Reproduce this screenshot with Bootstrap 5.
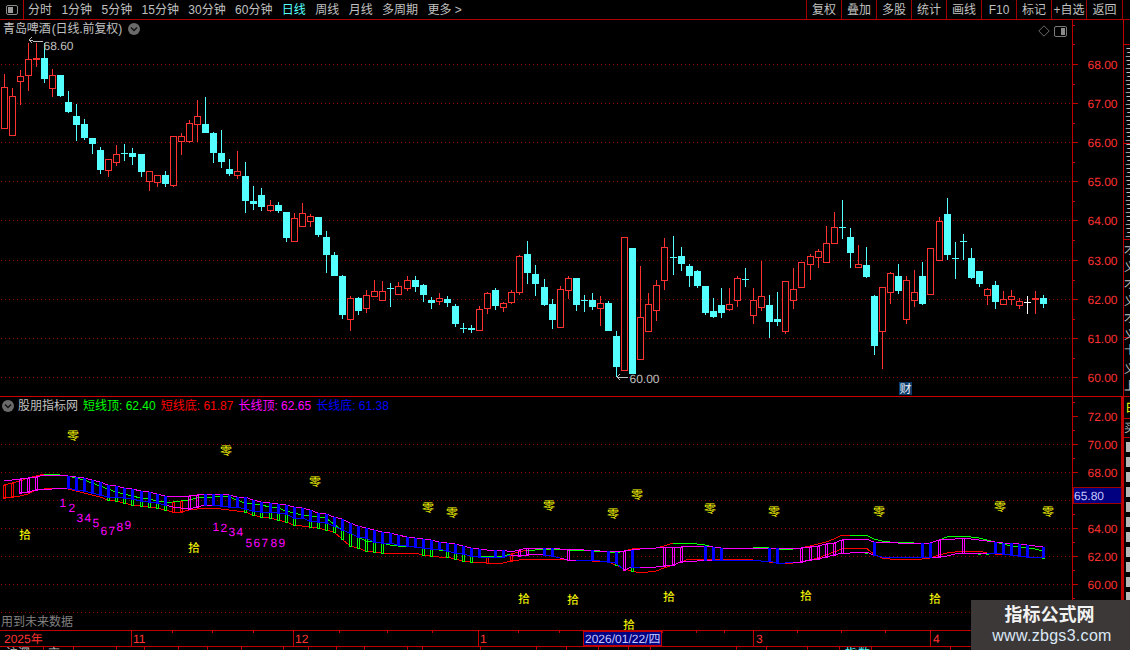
<!DOCTYPE html>
<html lang="zh">
<head>
<meta charset="utf-8">
<title>青岛啤酒</title>
<link href="https://cdn.jsdelivr.net/npm/bootstrap@5.3.0/dist/css/bootstrap.min.css" rel="stylesheet">
<style>
html,body{margin:0;height:650px;overflow:hidden;background:#000;}
body,svg text{font-family:"Liberation Sans","Noto Sans CJK SC",sans-serif;font-size:12px;}
.term{width:1130px;height:650px;background:#000;color:#c0c0c0;line-height:1;}
.tbar{height:20px;border-bottom:1px solid #b00000;flex:none;}
.tlogo{width:24px;height:19px;border-right:1px solid #b00000;flex:none;}
.titems{gap:9.4px;padding-left:4px;}
.titem{white-space:nowrap;}
.titem-on{color:#54ffff;}
.tcells{margin-right:7px;}
.tcell{width:35px;height:19px;border-left:1px solid #a00000;white-space:nowrap;}
.tcell-last{width:37px;border-right:1px solid #a00000;}
.workarea{height:630px;}
.panes{width:1123px;flex:none;}
.pane-main{height:376px;}
.pane-sub{height:234px;}
.pane-date{height:20px;}
.side-strip{width:7px;flex:none;}
.pane-main svg,.pane-sub svg,.pane-date svg,.side-strip svg{display:block;}
.pane-head{position:absolute;left:3px;top:2px;height:14px;gap:6px;white-space:nowrap;}
.pane-title{word-spacing:-2px;letter-spacing:-.12px;}
.pane-tools{position:absolute;left:1038px;top:5px;}
.sub-head{left:2px;top:3px;gap:0;}
.ind-g{color:#00ff00;margin-left:5px;}
.ind-r{color:#ff0000;margin-left:5px;}
.ind-m{color:#ff00ff;margin-left:5px;}
.ind-b{color:#0000ff;margin-left:5px;}
.sub-name{margin-left:4px;}
.future-note{position:absolute;left:1px;top:220px;color:#808080;white-space:nowrap;}
.stamp{position:absolute;right:0;bottom:0;width:159px;height:50px;background:#3c3838;z-index:5;}
.stamp-cn{font-weight:700;font-size:18px;color:#f2f2f2;margin-top:6px;margin-right:2px;}
.stamp-en{font-size:16px;color:#dbe8f5;margin-top:4px;margin-left:3px;letter-spacing:.3px;}
</style>
</head>
<body>
<div class="term d-flex flex-column position-relative">
  <div class="tbar d-flex align-items-center">
    <div class="tlogo d-flex align-items-center justify-content-center">
      <svg width="12" height="10" viewBox="0 0 12 10"><rect x=".5" y=".5" width="11" height="9" rx="1.5" fill="none" stroke="#8a8a8a"/><rect x="2" y="2" width="5" height="6" fill="#9a9a9a"/></svg>
    </div>
    <div class="titems d-flex align-items-center">
      <span class="titem">分时</span><span class="titem">1分钟</span><span class="titem">5分钟</span><span class="titem">15分钟</span><span class="titem">30分钟</span><span class="titem">60分钟</span><span class="titem titem-on">日线</span><span class="titem">周线</span><span class="titem">月线</span><span class="titem">多周期</span><span class="titem">更多 &gt;</span>
    </div>
    <div class="tcells d-flex ms-auto">
      <div class="tcell d-flex align-items-center justify-content-center">复权</div>
      <div class="tcell d-flex align-items-center justify-content-center">叠加</div>
      <div class="tcell d-flex align-items-center justify-content-center">多股</div>
      <div class="tcell d-flex align-items-center justify-content-center">统计</div>
      <div class="tcell d-flex align-items-center justify-content-center">画线</div>
      <div class="tcell d-flex align-items-center justify-content-center">F10</div>
      <div class="tcell d-flex align-items-center justify-content-center">标记</div>
      <div class="tcell d-flex align-items-center justify-content-center">+自选</div>
      <div class="tcell tcell-last d-flex align-items-center justify-content-center">返回</div>
    </div>
  </div>
  <div class="workarea d-flex">
    <div class="panes d-flex flex-column">
      <div class="pane-main position-relative">
        <svg id="mainSvg" width="1123" height="376" viewBox="0 20 1123 376" shape-rendering="crispEdges"></svg>
        <div class="pane-head d-flex align-items-center">
          <span class="pane-title">青岛啤酒 (日线.前复权)</span>
          <svg width="12" height="12" viewBox="0 0 12 12"><circle cx="6" cy="6" r="6" fill="#6a6a6a"/><path d="M3 4.5 6 7.5 9 4.5" fill="none" stroke="#111" stroke-width="1.4"/></svg>
        </div>
        <div class="pane-tools d-flex align-items-center gap-1">
          <svg width="12" height="12" viewBox="0 0 12 12"><path d="M6 .8 11.2 6 6 11.2 .8 6Z" fill="none" stroke="#6a6a6a"/></svg>
          <svg width="13" height="11" viewBox="0 0 13 11"><rect x=".5" y=".5" width="12" height="10" rx="1.5" fill="none" stroke="#7a7a7a"/><rect x="7" y="2" width="4" height="7" fill="#8a8a8a"/></svg>
        </div>
      </div>
      <div class="pane-sub position-relative">
        <svg id="subSvg" width="1123" height="234" viewBox="0 396 1123 234" shape-rendering="crispEdges"></svg>
        <div class="pane-head sub-head d-flex align-items-center">
          <svg width="12" height="12" viewBox="0 0 12 12"><circle cx="6" cy="6" r="6" fill="#6a6a6a"/><path d="M3 4.5 6 7.5 9 4.5" fill="none" stroke="#111" stroke-width="1.4"/></svg>
          <span class="sub-name">股朋指标网</span>
          <span class="ind-g">短线顶: 62.40</span>
          <span class="ind-r">短线底: 61.87</span>
          <span class="ind-m">长线顶: 62.65</span>
          <span class="ind-b">长线底: 61.38</span>
        </div>
        <div class="future-note">用到未来数据</div>
      </div>
      <div class="pane-date">
        <svg id="dateSvg" width="1123" height="20" viewBox="0 630 1123 20" shape-rendering="crispEdges"></svg>
      </div>
    </div>
    <div class="side-strip">
      <svg id="sideSvg" width="7" height="630" viewBox="1123 20 7 630" shape-rendering="crispEdges"></svg>
    </div>
  </div>
  <div class="stamp">
    <div class="stamp-cn text-center">指标公式网</div>
    <div class="stamp-en text-center">www.zbgs3.com</div>
  </div>
</div>
<script>
var LINE='#c00000',DOT='#8c0000',RED='#ff3232',CY='#54ffff',GR='#c0c0c0';
// idx implied: colour, body top, body bottom, wick top, wick bottom
var K=[['r',87,128,74,129],['r',96,135,88,135],['r',76,81,70,105],['r',59,75,43,91],['R',58,60,43,67],['c',58,79,43,83],['r',75,88,69,97],['c',75,96,75,97],['c',102,112,91,113],['c',116,125,104,141],
['c',124,138,119,140],['c',138,144,138,154],['c',150,170,147,174],['r',159,170,159,177],['r',154,162,145,166],['C',153,153,144,161],['c',153,157,148,165],['c',154,172,154,177],['r',171,181,171,191],['r',175,182,175,187],
['c',175,184,171,187],['r',136,185,136,187],['r',136,141,133,155],['r',123,141,120,143],['r',116,124,100,142],['c',124,133,97,133],['c',133,153,132,163],['c',153,162,130,168],['c',169,174,159,176],['r',171,175,151,179],
['c',176,201,162,213],['c',201,204,186,210],['c',195,207,188,211],['r',205,210,200,212],['c',205,211,202,213],['c',212,238,212,242],['r',218,241,213,241],['r',213,226,203,226],['r',216,221,214,227],['c',217,235,217,237],
['c',237,255,231,273],['c',255,276,252,276],['c',276,315,275,319],['r',298,319,296,331],['c',298,311,297,315],['r',295,308,290,313],['r',291,296,280,296],['r',291,300,281,300],['C',288,288,283,307],['r',286,294,282,294],
['r',280,288,276,291],['c',280,287,276,292],['c',285,295,284,302],['c',300,303,297,309],['r',298,301,293,305],['c',299,303,296,307],['c',306,324,304,327],['C',328,328,323,333],['c',328,330,325,333],['r',309,330,306,330],
['r',293,308,292,314],['c',290,306,288,310],['r',303,307,302,312],['r',292,302,290,304],['r',256,292,255,295],['c',254,273,241,284],['c',274,284,265,296],['c',287,305,279,306],['c',304,320,299,329],['r',289,327,286,328],
['r',278,290,276,299],['c',278,305,278,311],['C',300,300,295,312],['c',300,307,293,310],['r',303,308,296,326],['c',303,331,301,331],['c',336,367,331,377],['r',237,370,237,371],['c',248,374,248,374],['r',317,359,266,359],
['r',304,331,293,331],['r',285,310,280,321],['r',247,280,238,290],['C',257,257,236,275],['c',256,264,247,271],['c',266,276,264,287],['c',271,286,270,288],['c',286,313,286,315],['c',311,317,298,318],['c',305,313,288,318],
['r',304,309,288,311],['r',278,300,276,307],['C',279,279,268,287],['r',300,315,288,324],['r',296,307,261,311],['c',305,322,295,338],['c',319,322,292,326],['r',281,331,281,334],['r',289,300,268,309],['r',262,287,262,287],
['r',256,264,254,280],['r',251,257,249,268],['r',243,262,226,262],['r',227,243,212,243],['C',227,227,200,239],['c',237,253,228,268],['r',264,267,245,268],['c',265,277,247,278],['c',296,346,295,355],['r',287,331,287,369],
['r',273,292,272,304],['c',276,291,264,294],['r',280,319,276,324],['r',292,300,270,307],['c',276,304,262,305],['r',248,294,248,295],['r',221,260,217,260],['c',214,255,198,260],['C',258,258,242,279],['C',241,241,234,260],
['c',258,278,248,279],['c',271,284,271,287],['r',289,295,288,305],['c',285,302,281,309],['r',299,304,291,304],['r',296,299,290,305],['r',301,305,298,309],['W',302,302,296,314],['R',298,300,291,314],['c',298,304,295,308]];
function col(i){return 4+8*i+(i>=17)+(i>=33)+(i>=50)+(i>=67)+(i>=83)+(i>=100)+(i>=116);}
function dots(y){return '<line x1="1" x2="1072" y1="'+y+'" y2="'+y+'" stroke="'+DOT+'" stroke-dasharray="1 3"/>';}
function rc(x,y,w,h,f){return '<rect x="'+x+'" y="'+y+'" width="'+w+'" height="'+h+'" fill="'+f+'"/>';}
function tx(x,y,t,f,extra){return '<text x="'+x+'" y="'+y+'" fill="'+f+'" '+(extra||'')+' text-rendering="geometricPrecision">'+t+'</text>';}
/* ---------- main pane ---------- */
var s='';
[64,103,142,181,220,260,299,338,377].forEach(function(y,i){
  s+=dots(y);
  s+=rc(1073,y,5,1,LINE);
  s+=tx(1087.5,y+5,(68-i)+'.00',RED);
  s+=rc(1073,y+20,2,1,LINE);
});
s+=rc(1073,44,2,1,LINE)+rc(1073,25,2,1,LINE);
K.forEach(function(k,i){
  var c=col(i),t=k[0],a=k[1],b=k[2],wt=k[3],wb=k[4];
  if(t==='r'){
    s+=rc(c,wt,1,a-wt,RED)+rc(c,b,1,wb-b,RED);
    s+='<rect x="'+(c-2.5)+'" y="'+(a+.5)+'" width="6" height="'+(b-a)+'" fill="#000" stroke="'+RED+'"/>';
  }else if(t==='c'){
    s+=rc(c,wt,1,wb-wt,CY)+rc(c-3,a,7,b-a,CY);
  }else if(t==='C'||t==='W'){
    var f=t==='W'?'#fff':CY;
    s+=rc(c,wt,1,wb-wt,f)+rc(c-3,a,7,1,f);
  }else{
    s+=rc(c,wt,1,wb-wt,RED)+rc(c-3,a,7,b-a,RED);
  }
});
// extreme price notes
s+='<path d="M29 40 H33 M29 40 L32 37 M29 40 L32 43 M33 41 H43" stroke="'+GR+'" fill="none"/>';
s+=tx(43.5,50,'68.60',GR);
s+='<path d="M617 377 H628 M617 377 L620 374 M617 377 L620 380" stroke="'+GR+'" fill="none"/>';
s+=tx(629.5,383,'60.00',GR);
s+=rc(899,382,13,13,'#0b3a68')+tx(899.5,393,'财','#e8f0f8');
s+=rc(1072,20,1,376,LINE);
document.getElementById('mainSvg').innerHTML=s;
/* ---------- indicator pane ---------- */
var mt=[[4,480],[16,480],[20,479],[28,477.7],[36,477],[43,475.3],[57,475.3],[68,476],[76,477.3],[84,478.3],[92,480],[100,481.7],[108,485],[116,486],[124,488],[132,489.3],[141,491],[149,492.3],[157,494],[165,496],[190,496],[203,494],[221,494],[229,495.3],[237,496.7],[245,497.3],[253,500],[261,501.7],[270,502.7],[278,504.3],[286,505],[294,506.7],[302,508.3],[310,510],[318,512.7],[326,514],[334,516.7],[342,519],[350,523],[358,525.7],[366,528],[374,530],[382,531.7],[390,533],[398,535],[407,536.7],[415,538],[423,539],[431,540],[439,541.7],[447,543],[455,544],[463,545.7],[471,548],[479,549],[495,550],[503,550],[511,551.5],[519,550],[527,548],[535,548],[553,548.5],[573,549],[590,550],[617,552],[627,550],[640,549],[673,546.7],[707,546],[727,548.3],[800,548.3],[813,546.7],[833,543.3],[843,539.3],[867,539],[873,541.7],[887,542.3],[930,543.3],[940,540],[963,538.3],[993,541.7],[1017,544],[1043,546.7]];
var bb=[[20,493],[28,492],[36,490],[43,489],[63,488],[68,488.3],[76,490],[84,491],[92,493.3],[100,495],[108,496.7],[116,497.3],[124,498.3],[132,499.3],[141,500.7],[149,501.7],[157,503.3],[165,505],[175,507],[189,509],[197,507],[203,505],[213,505.3],[221,506],[229,506.7],[237,507.3],[245,509.3],[253,510.7],[261,511.7],[270,511.7],[278,513.3],[286,514.3],[294,518.3],[302,518.3],[310,520.7],[318,521.7],[326,523.3],[334,526],[342,530],[350,533],[358,536.7],[366,538],[374,541.7],[382,543],[390,543],[398,545],[407,546],[415,546.7],[423,548],[431,549],[439,549],[447,551.3],[455,553],[463,554],[471,556],[479,557.3],[503,557.3],[511,555],[519,556],[527,555],[535,554],[553,556],[568,560],[592,560],[608,561.7],[616,563],[624,570],[632,567.3],[655,567],[664,566],[673,565],[681,561.7],[705,560],[733,560.3],[745,560],[769,561],[777,562.7],[790,562.5],[801,561.7],[810,560],[818,559],[826,556.7],[834,555],[842,552.7],[866,552.3],[875,555],[880,556.7],[917,557.3],[939,557.3],[963,552.7],[980,552.5],[995,553.3],[1003,554.3],[1011,555.3],[1019,556],[1027,556.7],[1043,557.3]];
var ts=[[4,485],[20,481],[28,478],[36,476],[43,474.3],[57,474.3],[67,476],[84,480],[100,486],[108,489],[124,494],[141,498],[165,502],[175,502],[203,497],[225,496],[245,503],[261,505],[278,508],[294,513],[310,516],[326,518],[342,530],[350,533.3],[358,537.3],[366,540.7],[374,541.7],[382,543.3],[395,546],[411,546],[423,548],[431,549],[447,550.7],[455,552.7],[463,554],[471,556],[487,556.7],[495,555.7],[503,556],[515,553],[525,550],[553,549],[580,550],[603,551.7],[617,552.7],[623,551],[636,548],[660,547.7],[673,543.3],[693,543.3],[703,544],[712,546.5],[727,548.3],[753,548.3],[760,547.3],[767,547.3],[780,550],[790,550],[800,548],[807,546.7],[817,544.3],[827,541.7],[837,538],[842,535],[867,535],[877,540],[887,541.7],[933,543.3],[943,537.3],[960,535.7],[977,537.7],[993,541.7],[1007,545],[1020,546.7],[1043,550.7]];
var rb=[[4,498],[20,496],[28,494],[36,490],[43,489],[63,487.5],[68,489],[100,497],[108,500],[116,501],[124,503],[132,505],[141,505.7],[149,507.3],[157,508.3],[165,510],[170,512],[180,512],[190,510],[200,508],[210,508],[225,509],[245,511.7],[253,515],[261,516.7],[270,518],[278,520],[286,521.7],[294,525],[310,526.7],[318,528.3],[326,530],[334,531.7],[342,539],[350,545.7],[358,548],[366,550.7],[374,551.7],[382,552.7],[390,553.3],[415,553.3],[423,555],[431,556],[447,557],[455,558.7],[463,560.7],[471,561.7],[480,562.5],[505,562.5],[511,561],[519,560],[527,558.5],[555,558.5],[570,560],[600,561],[610,562],[622,568],[632,571],[640,573.3],[655,571.7],[673,565],[687,559.3],[707,558.5],[743,559],[780,563.3],[797,563.3],[810,560],[827,555],[843,548.3],[867,547.7],[873,554],[882,558.3],[917,559.3],[933,557.3],[943,554],[963,550.7],[980,550.7],[987,552.7],[1000,554],[1020,556],[1043,558]];
function val(c,x){
  if(x<=c[0][0])return c[0][1];
  for(var i=1;i<c.length;i++){if(x<=c[i][0]){var a=c[i-1],b=c[i];return a[1]+(b[1]-a[1])*(x-a[0])/(b[0]-a[0]);}}
  return c[c.length-1][1];
}
function inR(x,r){return r.some(function(p){return x>=p[0]&&x<=p[1];});}
var bbMag=[[0,67],[165,205],[505,535],[560,575],[620,628],[640,705],[790,866],[930,985]];
var tsRed=[[0,42],[507,520],[620,640],[790,842],[655,672]];
function seg(curve,x0,colorOf){
  var h='';
  for(var i=0;i<130;i++){
    var a=col(i),b=col(i+1);
    if(a<x0||a>=1043)continue;
    var y1=Math.round(val(curve,a)),y2=Math.round(val(curve,b));
    h+='<line x1="'+a+'" y1="'+y1+'" x2="'+b+'" y2="'+y2+'" stroke="'+colorOf(a)+'"/>';
  }
  return h;
}
var u=rc(0,396,1123,1,'#d00000');
[444,472,500,528,556,584,612].forEach(function(y){u+=dots(y);});
[[416,'72'],[444,'70'],[472,'68'],[528,'64'],[556,'62'],[584,'60']].forEach(function(p){
  u+=rc(1073,p[0],5,1,LINE)+tx(1087.5,p[0]+5,p[1]+'.00',RED);
});
[402,430,458,514,542,570,598,626].forEach(function(y){u+=rc(1073,y,2,1,LINE);});
u+=seg(ts,4,function(x){return inR(x,tsRed)?'#ff0000':'#00ff00';});
u+=seg(rb,4,function(){return '#ff0000';});
function bar(i,top,bot,f){
  var c=col(i);
  var a=Math.round(val(top,c)),b=Math.round(val(bot,c));
  return '<rect x="'+(c-.5)+'" y="'+(a+.5)+'" width="2" height="'+Math.max(b-a,1)+'" fill="none" stroke="'+f+'"/>';
}
function solid(i,top,bot,f){
  var c=col(i);
  var a=Math.round(val(top,c)),b=Math.round(val(bot,c));
  return rc(c-1,a,3,Math.max(b-a+1,1),f);
}
var green=[13,14,15,16,17,18,19,20,30,31,32,33,34,35,36,38,39,40,41,42,43,44,45,46,47,52,53,55,56,57,58,76,78,107,121,122,129];
var red=[0,1,21,22,60,63];
var mag=[2,3,4,23,24,64,65,70,77,82,83,84,99,100,101,102,103,104,116,119];
var blue=[8,9,10,11,12,13,14,15,16,17,18,19,20];
for(var q=25;q<=59;q++)blue.push(q);
blue=blue.concat([61,62,67,68,73,75,76,78,87,88,89,95,96,108,114,115,123,124,125,126,127,129]);
green.forEach(function(i){u+=bar(i,bb,rb,'#00ff00');});
red.forEach(function(i){u+=bar(i,ts,rb,'#ff0000');});
u+=seg(mt,4,function(){return '#ff00ff';});
u+=seg(bb,20,function(x){return inR(x,bbMag)?'#ff00ff':'#0000ff';});
mag.forEach(function(i){u+=bar(i,mt,bb,'#ff00ff');});
blue.forEach(function(i){u+=solid(i,mt,bb,'#0000ff');});
[[73,435],[226,450],[315,481],[428,507],[452,512],[549,505],[613,513],[637,494],[710,508],[774,511],[879,511],[1000,506],[1048,511]].forEach(function(p){
  u+=tx(p[0]-6,p[1]+5,'零','#ffff00','font-size="13"');
});
[[25,534],[194,547],[524,598],[573,599],[669,596],[629,624],[806,595],[935,598]].forEach(function(p){
  u+=tx(p[0]-6,p[1]+5,'拾','#ffff00','font-size="13"');
});
[['1',63,502],['2',72,507],['3',80,517],['4',88,517],['5',96,522],['6',104,530],['7',112,530],['8',120,526],['9',128,524],['1',216,526],['2',224,527],['3',232,531],['4',240,531],['5',249,542],['6',257,542],['7',265,542],['8',274,542],['9',282,542]].forEach(function(p){
  u+=tx(p[1]-3.5,p[2]+4.5,p[0],'#ff00ff');
});
u+=rc(1072,396,1,234,LINE)+rc(1121,396,2,234,LINE);
u+='<rect x="1073.5" y="487.5" width="48" height="16" fill="#000080" stroke="#a00000"/>';
u+=tx(1074,500,'65.80','#c8c8ff');
document.getElementById('subSvg').innerHTML=u;
/* ---------- date strip ---------- */
var d=rc(0,630,1123,1,LINE)+rc(0,646,1123,1,LINE);
[172,212,253,339,387,432,518,559,662,696,724,797,841,885,973].forEach(function(x){d+=rc(x,631,1,2,LINE);});
[131,293,478,753,930].forEach(function(x){d+=rc(x,631,1,15,LINE);});
[[4,'2025年'],[133,'11'],[295,'12'],[480,'1'],[756,'3'],[933,'4']].forEach(function(p){d+=tx(p[0],643,p[1],RED);});
d+='<rect x="583.5" y="631.5" width="78" height="14" fill="#000080" stroke="#c00000"/>';
d+=tx(585,643,'2026/01/22/四','#c8c8ff');
[43,73,116,144,178,207,241,283,308,336,364,407,422,480,536,566,598,628,650,736,766,807,839,871,950].forEach(function(x){d+=rc(x,647,1,3,LINE);});
d+=tx(6,657,'沪深','#c0c0c0')+tx(48,657,'京','#c0c0c0')+tx(845,657,'指','#54ffff')+tx(858,657,'数','#54ffff');
document.getElementById('dateSvg').innerHTML=d;
/* ---------- right strip ---------- */
var r=rc(1123,20,1,610,LINE)+rc(1124,44,6,1,LINE);
[143,239,337,396,418,437].forEach(function(y){r+=rc(1123,y,7,1,LINE);});
for(var y=47;y<232;y+=12){r+=tx(1125,y+10,'三',GR);}
for(var y2=250;y2<336;y2+=17){r+=tx(1124,y2+4,y2%2?'义':'才',GR);}
r+=tx(1124,354,'十',GR)+tx(1124,373,'义',GR)+tx(1124,390,'上',GR);
r+=tx(1125,412,'日','#ffff00')+tx(1124,432,'买',GR);
for(var y3=442;y3<628;y3+=15){r+=rc(1126,y3,4,10,'#b8b8b8');}
document.getElementById('sideSvg').innerHTML=r;
</script>
<script src="https://cdn.jsdelivr.net/npm/bootstrap@5.3.0/dist/js/bootstrap.bundle.min.js"></script>
</body>
</html>
